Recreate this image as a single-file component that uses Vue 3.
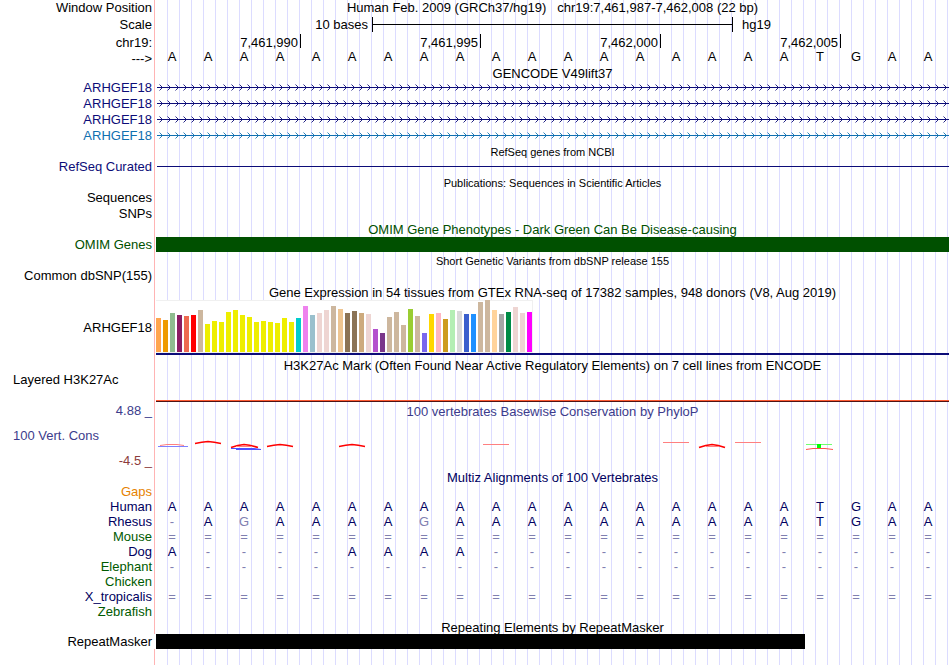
<script setup>
const bases = 'AAAAAAAAAAAAAAAAAATGAA'.split('')

const genes = [
  { name: 'ARHGEF18', color: 'navy' },
  { name: 'ARHGEF18', color: 'navy' },
  { name: 'ARHGEF18', color: 'navy' },
  { name: 'ARHGEF18', color: 'blue' }
]

const ticks = [
  { label: '7,461,990', span: 4 },
  { label: '7,461,995', span: 5 },
  { label: '7,462,000', span: 5 },
  { label: '7,462,005', span: 5 }
]

// one entry per tissue: [height, color]
const tissues = [
  [34, '#ffa54f'], [32, '#ee9a00'], [39, '#8fbc8f'], [37, '#8b1c62'], [36, '#ee6a50'],
  [37, '#ff0000'], [42, '#cdb79e'], [28, '#eeee00'], [31, '#eeee00'], [30, '#eeee00'],
  [40, '#eeee00'], [42, '#eeee00'], [37, '#eeee00'], [35, '#eeee00'], [30, '#eeee00'],
  [31, '#eeee00'], [30, '#eeee00'], [29, '#eeee00'], [34, '#eeee00'], [30, '#eeee00'],
  [34, '#00cdcd'], [46, '#ee82ee'], [37, '#9ac0cd'], [39, '#eed5d2'], [42, '#eed5d2'],
  [46, '#cdb79e'], [43, '#eec591'], [39, '#8b7355'], [41, '#8b7355'], [39, '#cdaa7d'],
  [38, '#eed5d2'], [23, '#b452cd'], [19, '#7a378b'], [35, '#cdb79e'], [40, '#cdb79e'],
  [27, '#cdb79e'], [43, '#9acd32'], [36, '#cdb79e'], [19, '#7a67ee'], [38, '#ffd700'],
  [39, '#ffb6c1'], [33, '#cd9b1d'], [42, '#b4eeb4'], [41, '#d9d9d9'], [38, '#3a5fcd'],
  [38, '#1e90ff'], [50, '#cdb79e'], [52, '#cdb79e'], [42, '#ffd39b'], [38, '#a6a6a6'],
  [40, '#008b45'], [45, '#eed5d2'], [39, '#eed5d2'], [40, '#ff00ff']
]

const species = [
  { name: 'Gaps', color: 'orange', seq: '' },
  { name: 'Human', color: 'ink', seq: 'AAAAAAAAAAAAAAAAAATGAA' },
  { name: 'Rhesus', color: 'ink', seq: '-AGAAAAGAAAAAAAAAATGAA', faded: [2, 7] },
  { name: 'Mouse', color: 'green', seq: '======================' },
  { name: 'Dog', color: 'ink', seq: 'A----AAAA-------------' },
  { name: 'Elephant', color: 'green', seq: '----------------------' },
  { name: 'Chicken', color: 'green', seq: '' },
  { name: 'X_tropicalis', color: 'ink', seq: '======================' },
  { name: 'Zebrafish', color: 'green', seq: '' }
]

const isFaded = (s, ch, i) => ch === '-' || ch === '=' || (s.faded || []).includes(i)
</script>

<template>
  <main class="browser">
    <div class="guides"></div>

    <div class="row h16">
      <div class="label">Window Position</div>
      <div class="title flush">Human Feb. 2009 (GRCh37/hg19)&nbsp;&nbsp; chr19:7,461,987-7,462,008 (22 bp)</div>
    </div>
    <div class="row h18">
      <div class="label">Scale</div>
      <div class="data ruler">
        <span class="scale-text">10 bases</span>
        <span class="scale-bar"></span>
        <span class="scale-name">hg19</span>
      </div>
    </div>
    <div class="row h17">
      <div class="label">chr19:</div>
      <div class="data ruler">
        <span v-for="t in ticks" :key="t.label" :class="['tick', 'span' + t.span]">{{ t.label }}</span>
      </div>
    </div>
    <div class="row h15">
      <div class="label">---&gt;</div>
      <div class="letters bases">
        <span v-for="(b, i) in bases" :key="i">{{ b }}</span>
      </div>
    </div>

    <!-- GENCODE -->
    <div class="row h14">
      <div class="title">GENCODE V49lift37</div>
    </div>
    <div v-for="(g, i) in genes" :key="i" :class="['row', 'h16', g.color]">
      <div class="label">{{ g.name }}</div>
      <svg class="gene" width="100%" height="16">
        <defs>
          <pattern :id="'arrows' + i" width="8" height="16" patternUnits="userSpaceOnUse">
            <path d="M2.5 4.5 L5.5 7.5 L2.5 10.5" fill="none" stroke="currentColor" stroke-width="0.9" />
          </pattern>
        </defs>
        <rect width="100%" height="16" :fill="`url(#arrows${i})`" />
        <rect y="7" width="100%" height="1" fill="currentColor" />
      </svg>
    </div>

    <!-- RefSeq -->
    <div class="row h15">
      <div class="title small">RefSeq genes from NCBI</div>
    </div>
    <div class="row h15 navy">
      <div class="label">RefSeq Curated</div>
      <div class="thin-line"></div>
    </div>

    <!-- Publications -->
    <div class="row h16">
      <div class="title small">Publications: Sequences in Scientific Articles</div>
    </div>
    <div class="row h16">
      <div class="label">Sequences</div>
    </div>
    <div class="row h15">
      <div class="label">SNPs</div>
    </div>

    <!-- OMIM -->
    <div class="row h16 omim">
      <div class="title">OMIM Gene Phenotypes - Dark Green Can Be Disease-causing</div>
    </div>
    <div class="row h15 omim">
      <div class="label">OMIM Genes</div>
      <div class="block"></div>
    </div>

    <!-- dbSNP -->
    <div class="row h16">
      <div class="title small">Short Genetic Variants from dbSNP release 155</div>
    </div>
    <div class="row h15">
      <div class="label">Common dbSNP(155)</div>
    </div>

    <!-- GTEx -->
    <div class="row h17">
      <div class="title">Gene Expression in 54 tissues from GTEx RNA-seq of 17382 samples, 948 donors (V8, Aug 2019)</div>
    </div>
    <div class="row h55">
      <div class="label">ARHGEF18</div>
      <div class="gtex">
        <div class="bars">
          <i v-for="(t, i) in tissues" :key="i" :style="{ height: t[0] + 'px', background: t[1] }"></i>
        </div>
      </div>
    </div>

    <!-- H3K27Ac -->
    <div class="row h19">
      <div class="title">H3K27Ac Mark (Often Found Near Active Regulatory Elements) on 7 cell lines from ENCODE</div>
    </div>
    <div class="row h28">
      <div class="label left top">Layered H3K27Ac</div>
      <div class="signal"></div>
    </div>

    <!-- Conservation -->
    <div class="row h18">
      <div class="label cons">4.88 _</div>
      <div class="title cons">100 vertebrates Basewise Conservation by PhyloP</div>
    </div>
    <div class="row h32">
      <div class="label left cons">100 Vert. Cons</div>
      <svg class="wiggle" viewBox="0 0 792 32" preserveAspectRatio="none" fill="none">
        <path d="M6 25.5 L13 24.5 H23 L30 25.5" stroke="#ff8080" />
        <path d="M4 26.5 H34" stroke="#8080ff" />
        <path d="M41 23.5 Q48 22 54 21.5 Q60 22 67 23.5" stroke="#ff0000" stroke-width="1.3" />
        <path d="M77 27.5 Q84 25 90 24.5 Q96 25 104 27.5" stroke="#ff0000" stroke-width="1.6" />
        <path d="M82 26.5 H98" stroke="#ff8080" />
        <path d="M77 28.5 H100 L107 29.5 H82" stroke="#5050ff" />
        <path d="M113 26.5 Q120 25 126 24.5 Q132 25 139 26.5" stroke="#ff0000" stroke-width="1.3" />
        <path d="M185 26.5 Q192 25 198 24.5 Q204 25 211 26.5" stroke="#ff0000" stroke-width="1.3" />
        <path d="M329 24.5 H355 M509 22.5 H535 M581 22.5 H607" stroke="#ff8080" />
        <path d="M545 27.5 Q552 25 558 24.5 Q564 25 571 27.5" stroke="#ff0000" stroke-width="1.7" />
        <path d="M552 26.5 H565" stroke="#ff8080" />
        <path d="M652 24.5 H678" stroke="#70ff70" />
        <path d="M663 24 H667 V28 H663 Z" fill="#00ff00" />
        <path d="M652 29.5 L659 28.5 H671 L679 29.5" stroke="#ff5050" />
      </svg>
    </div>
    <div class="row h17">
      <div class="label negative">-4.5 _</div>
    </div>

    <!-- Multiz -->
    <div class="row h15 ink">
      <div class="title">Multiz Alignments of 100 Vertebrates</div>
    </div>
    <div v-for="s in species" :key="s.name" :class="['row', 'h15', s.color]">
      <div class="label">{{ s.name }}</div>
      <div class="letters ink">
        <span v-for="(ch, i) in s.seq.split('')" :key="i" :class="{ faded: isFaded(s, ch, i) }">{{ ch }}</span>
      </div>
    </div>

    <!-- RepeatMasker -->
    <div class="row h15">
      <div class="title">Repeating Elements by RepeatMasker</div>
    </div>
    <div class="row h15">
      <div class="label">RepeatMasker</div>
      <div class="block repeat"></div>
    </div>
  </main>
</template>

<style>
body {
  margin: 0;
  background: #fff;
}
</style>

<style scoped>
.browser {
  position: relative;
  padding-right: 1px;
  padding-bottom: 16px;
  font-family: "Liberation Sans", Arial, sans-serif;
  font-size: 13px;
  color: #000;
  white-space: nowrap;
  overflow: hidden;
}

/* vertical guide lines behind all the tracks */
.guides {
  position: absolute;
  z-index: -1;
  top: 0;
  bottom: 0;
  left: 154px;
  right: 2px;
  border-left: 1px solid #ffb4b4;
  padding-left: 1px;
  background: linear-gradient(to left, #dcdcff 1px, transparent 1px) 0 0 / calc(100% / 66) 100% content-box content-box;
}

.row {
  display: grid;
  grid-template-columns: 152px minmax(0, 1fr);
  column-gap: 2px;
}

.h14 { height: 14px; line-height: 14px; }
.h15 { height: 15px; line-height: 15px; }
.h16 { height: 16px; line-height: 16px; }
.h17 { height: 17px; line-height: 17px; }
.h18 { height: 18px; line-height: 18px; }
.h19 { height: 19px; line-height: 19px; }
.h28 { height: 28px; line-height: 28px; }
.h32 { height: 32px; line-height: 32px; }
.h55 { height: 55px; line-height: 55px; }

.label {
  text-align: right;
}

.label.left {
  text-align: left;
  padding-left: 13px;
}

.label.top {
  line-height: 12px;
}

.title {
  grid-column: 2;
  padding-top: 1px;
  padding-left: 2px;
  text-align: center;
}

.title.flush {
  padding-top: 0;
}

.small {
  font-size: 11px;
}

.navy { color: #0c0c78; }
.blue { color: #1070b0; }
.ink { color: #000060; }
.green { color: #005a00; }
.orange { color: #e68200; }
.omim { color: #005000; }
.cons { color: #3c3c8c; }
.negative { color: #8c3c3c; }

/* scale and coordinates */
.data {
  margin-left: 2px;
  margin-right: 1px;
}

.ruler {
  display: grid;
  grid-template-columns: repeat(22, minmax(0, 1fr));
}

.scale-text {
  grid-column: span 6;
  text-align: right;
  padding-right: 4px;
}

.scale-bar {
  grid-column: span 10;
  height: 15px;
  margin-top: 1px;
  margin-right: -1px;
  border-left: 1px solid #000;
  border-right: 1px solid #000;
  background: linear-gradient(#000, #000) 0 7px / 100% 1px no-repeat;
}

.scale-name {
  grid-column: span 6;
  padding-left: 10px;
}

.tick {
  height: 14px;
  margin-right: -1px;
  padding-right: 2px;
  border-right: 1px solid #000;
  text-align: right;
}

.span4 { grid-column: span 4; }
.span5 { grid-column: span 5; }

.letters {
  display: grid;
  grid-template-columns: repeat(22, minmax(0, 1fr));
  margin-right: 3px;
  text-align: center;
}

.bases {
  line-height: 12px;
}

.faded {
  color: #8080b0;
}

/* tracks */
.gene {
  display: block;
  padding-left: 3px;
  box-sizing: border-box;
}

.thin-line {
  height: 1px;
  margin: 7px 0 0 3px;
  background: currentColor;
}

.block {
  margin-left: 2px;
  background: currentColor;
}

.repeat {
  width: 81.9%;
  margin-left: 0;
  box-sizing: border-box;
  border-left: 2px solid #fff;
}

.gtex {
  margin-left: 2px;
  border-bottom: 2px solid #0c0c78;
}

.bars {
  display: flex;
  align-items: flex-end;
  gap: 2px;
  width: max-content;
  height: 53px;
  box-sizing: border-box;
  border: 1px solid #f0f0f0;
  border-left: 0;
  background: #fff;
}

.bars i {
  width: 5px;
}

.signal {
  align-self: end;
  height: 1px;
  margin-left: 2px;
  border-top: 1px solid #ff5a32;
  background: #501414;
}

.wiggle {
  display: block;
  width: calc(100% - 3px);
  height: 32px;
}
</style>
